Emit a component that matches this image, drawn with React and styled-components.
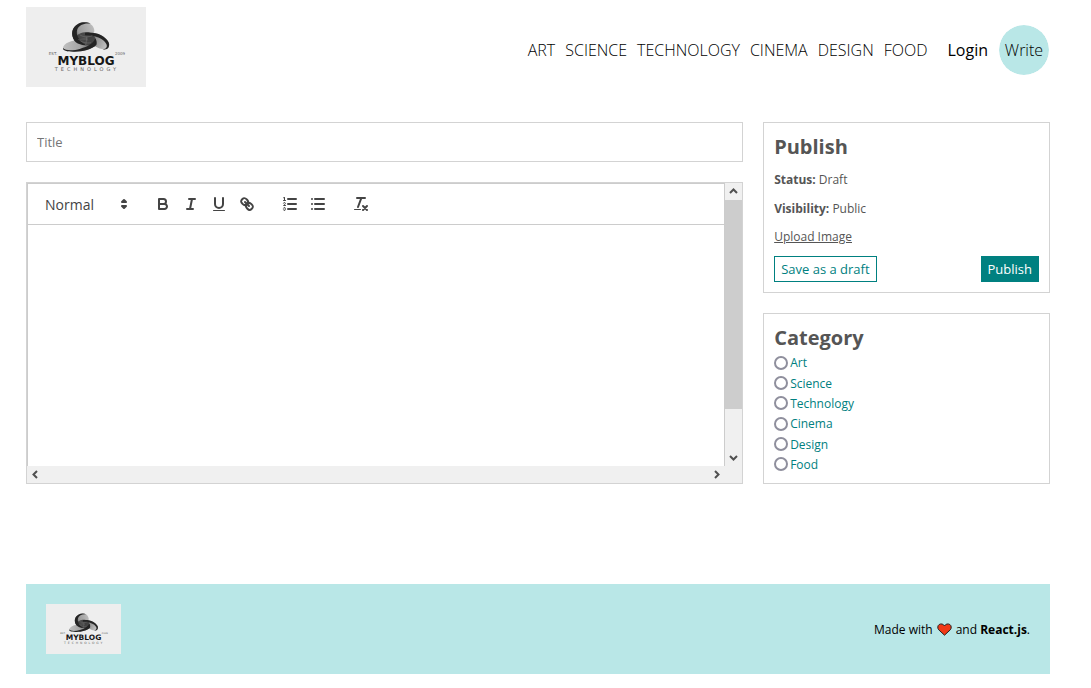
import React from "react";
import styled, { createGlobalStyle } from "styled-components";

const GlobalStyle = createGlobalStyle`
  *, *::before, *::after { box-sizing: border-box; }
  body {
    margin: 0;
    padding-right: 15px;
    background: #fff;
    color: #000;
    font-family: "Open Sans", "Noto Sans", sans-serif;
    font-size: 16px;
  }
  button, input, select, textarea { font-family: inherit; }
`;

const Container = styled.div`
  max-width: 1024px;
  margin: 0 auto;
`;

const Header = styled.header`
  display: flex;
  align-items: center;
  justify-content: space-between;
  min-height: 100px;
`;

const LogoLink = styled.a`
  display: block;
  margin-bottom: ${(p) => (p.$raised ? "6px" : "0")};
`;

const LogoSvg = styled.svg`
  display: block;
  width: ${(p) => p.$width}px;
  height: auto;
  background: #eee;
`;

const Nav = styled.nav`
  display: flex;
  align-items: center;
  gap: 10px;
`;

const NavLink = styled.a`
  color: #000;
  font-weight: ${(p) => (p.$account ? 400 : 300)};
  line-height: 22px;
  margin-left: ${(p) => (p.$account ? "10px" : "0")};
  text-decoration: none;
`;

const WriteLink = styled.a`
  display: flex;
  align-items: center;
  justify-content: center;
  width: 52px;
  height: 52px;
  border: 1px solid #fff;
  border-radius: 50%;
  background: #b9e7e7;
  background-clip: padding-box;
  color: #000;
  font-weight: 300;
  text-decoration: none;
`;

const Main = styled.main`
  display: flex;
  gap: 20px;
  margin-top: 22px;
`;

const Content = styled.section`
  flex: 5;
  min-width: 0;
  display: flex;
  flex-direction: column;
  gap: 20px;
`;

const TitleInput = styled.input`
  width: 100%;
  height: 40px;
  padding: 10px;
  border: 1px solid lightgray;
  font-size: 13px;
  &::placeholder { color: #757575; opacity: 1; }
`;

const EditorFrame = styled.div`
  display: grid;
  grid-template: 1fr 17px / 1fr 17px;
  height: 302px;
  border: 1px solid lightgray;
  background: #f0f0f0;
`;

const Editor = styled.div`
  display: flex;
  flex-direction: column;
  border: 1px solid #ccc;
  border-bottom: 0;
  background: #fff;
`;

const Toolbar = styled.div`
  display: flex;
  gap: 15px;
  padding: 8px;
  border-bottom: 1px solid #ccc;
`;

const ToolGroup = styled.div`
  display: flex;
`;

const ToolButton = styled.button`
  width: 28px;
  height: 24px;
  padding: 3px 5px;
  border: 0;
  background: none;
`;

const ToolIcon = styled.svg`
  display: block;
  width: 18px;
  height: 18px;
  fill: none;
  stroke: #444;
  stroke-width: 2;
  stroke-linecap: round;
  stroke-linejoin: round;
  .thin { stroke-width: 1; }
  .solid { fill: #444; stroke: none; }
  .filled { fill: #444; }
`;

const Picker = styled.div`
  position: relative;
  width: 98px;
  height: 24px;
  ${ToolIcon} {
    position: absolute;
    top: 3px;
    right: 1px;
    pointer-events: none;
  }
`;

const PickerSelect = styled.select`
  appearance: none;
  width: 100%;
  height: 24px;
  padding: 0 8px;
  border: 1px solid transparent;
  background: none;
  color: #444;
  font-size: 14px;
  font-weight: 500;
`;

const EditorText = styled.textarea`
  flex: 1;
  width: 100%;
  padding: 12px 15px;
  border: 0;
  outline: 0;
  resize: none;
  overflow: hidden;
  font-size: 13px;
`;

const ScrollTrack = styled.div`
  display: flex;
  flex-direction: ${(p) => (p.$vertical ? "column" : "row")};
  justify-content: space-between;
`;

const ScrollArrow = styled.button`
  width: 17px;
  height: 17px;
  padding: 0;
  border: 0;
  background: none;
  svg {
    display: block;
    fill: none;
    stroke: #505050;
    stroke-width: 2;
  }
`;

const ScrollRail = styled.div`
  flex: 1;
`;

const ScrollThumb = styled.div`
  height: 84%;
  background: #cdcdcd;
`;

const Sidebar = styled.aside`
  flex: 2;
  min-width: 0;
  display: flex;
  flex-direction: column;
  gap: 20px;
`;

const Panel = styled.section`
  flex: 1;
  display: flex;
  flex-direction: column;
  justify-content: space-between;
  padding: 10px;
  border: 1px solid lightgray;
  color: #555;
  font-size: 12px;
  line-height: 17px;
`;

const PanelTitle = styled.h1`
  margin: 0;
  font-size: 20px;
  line-height: 27px;
`;

const FileInput = styled.input`
  display: none;
`;

const UploadLabel = styled.label`
  text-decoration: underline;
  cursor: pointer;
`;

const Actions = styled.div`
  display: flex;
  justify-content: space-between;
`;

const ActionButton = styled.button`
  padding: 3px 6px;
  border: 1px solid teal;
  background: ${(p) => (p.$primary ? "teal" : "#fff")};
  color: ${(p) => (p.$primary ? "#fff" : "teal")};
  font-size: 13px;
  line-height: 18px;
  cursor: pointer;
`;

const Option = styled.label`
  display: flex;
  align-items: center;
  gap: 2px;
  color: teal;
`;

const Radio = styled.input`
  appearance: none;
  width: 14px;
  height: 14px;
  margin: 0;
  border: 2px solid #8f8f9d;
  border-radius: 50%;
  background: #fff;
  &:checked {
    border-color: teal;
    background: radial-gradient(teal 3px, #fff 4px);
  }
`;

const Footer = styled.footer`
  display: flex;
  align-items: center;
  justify-content: space-between;
  margin-top: 100px;
  padding: 20px;
  background: #b9e7e7;
  font-size: 12px;
`;

const Credit = styled.span`
  display: flex;
  align-items: center;
  gap: 4px;
  line-height: 17px;
`;

function Logo({ width, id }) {
  return (
    <LogoSvg $width={width} viewBox="0 0 120 80" role="img" aria-label="MyBlog Technology">
      <defs>
        <linearGradient id={id + "top"} x1="0" y1="0.6" x2="1" y2="0.3">
          <stop offset="0" stopColor="#444" />
          <stop offset="0.3" stopColor="#9a9a9a" />
          <stop offset="1" stopColor="#bdbdbd" />
        </linearGradient>
        <linearGradient id={id + "left"} x1="0" y1="0" x2="1" y2="0">
          <stop offset="0" stopColor="#c0c0c0" />
          <stop offset="0.5" stopColor="#a5a5a5" />
          <stop offset="1" stopColor="#555" />
        </linearGradient>
        <linearGradient id={id + "right"} x1="0" y1="0" x2="1" y2="0.4">
          <stop offset="0" stopColor="#333" />
          <stop offset="0.5" stopColor="#8d8d8d" />
          <stop offset="1" stopColor="#bdbdbd" />
        </linearGradient>
      </defs>
      <g transform="translate(19 8) scale(0.3333)">
        <path d="M54 99C56 84 82 73 110 74C132 75 150 80 154 90C140 103 110 111 85 110C66 110 53 107 54 99Z" fill={`url(#${id}left)`} />
        <path d="M120 53C152 49 182 62 191 82C196 96 188 106 174 103C160 100 148 92 134 86Z" fill={`url(#${id}right)`} />
        <path d="M89 78C76 58 80 36 100 26C122 16 146 26 148 46C149 60 136 66 118 68Z" fill={`url(#${id}top)`} />
        <path d="M93 70C94 56 112 51 130 52C148 56 155 72 152 88C134 96 98 92 93 70Z" fill="#3a3a3a" opacity="0.85" />
        <path d="M89 78C76 58 80 36 100 26C112 20 128 21 137 26C118 23 102 30 97 43C91 60 103 80 124 91C108 90 95 86 89 78Z" fill="#242424" />
        <path d="M120 53C152 49 182 62 191 82C196 96 188 106 174 103C184 102 188 95 184 87C176 70 150 61 120 61Z" fill="#242424" />
        <path d="M54 99C62 108 86 107 106 101C128 95 144 87 151 70C156 78 156 86 154 90C140 103 110 111 85 110C66 110 53 107 54 99Z" fill="#242424" />
        <path d="M104 59C112 66 130 68 142 62M100 72C108 82 124 86 138 83M126 66L122 90" fill="none" stroke="#777" strokeWidth="2" opacity="0.8" />
      </g>
      <g fontFamily="DejaVu Sans, sans-serif" textAnchor="middle">
        <text x="27" y="48" fontSize="4" fill="#666">EST.</text>
        <text x="94" y="48" fontSize="4" fill="#666">2009</text>
        <text x="60" y="58" fontSize="12" fontWeight="700" fill="#161616">MYBLOG</text>
        <text x="61" y="64" fontSize="5" letterSpacing="3" fill="#666">TECHNOLOGY</text>
      </g>
    </LogoSvg>
  );
}

const icons = {
  Bold: (
    <>
      <path d="M5,4H9.5A2.5,2.5,0,0,1,12,6.5v0A2.5,2.5,0,0,1,9.5,9H5V4Z" />
      <path d="M5,9h5.5A2.5,2.5,0,0,1,13,11.5v0A2.5,2.5,0,0,1,10.5,14H5V9Z" />
    </>
  ),
  Italic: <path d="M7,4H13M5,14H11M8,14L10,4" />,
  Underline: (
    <>
      <path d="M5,3V9a4.012,4.012,0,0,0,4,4H9a4.012,4.012,0,0,0,4-4V3" />
      <rect className="solid" x="3" y="15" width="12" height="1" rx="0.5" />
    </>
  ),
  Link: (
    <>
      <path d="M7,7L11,11" />
      <path d="M8.9,4.577a3.476,3.476,0,0,1,.36,4.679A3.476,3.476,0,0,1,4.577,8.9C3.185,7.5,2.035,6.4,4.217,4.217S7.5,3.185,8.9,4.577Z" />
      <path d="M13.423,9.1a3.476,3.476,0,0,0-4.679-.36,3.476,3.476,0,0,0,.36,4.679c1.392,1.392,2.5,2.542,4.679.36S14.815,10.5,13.423,9.1Z" />
    </>
  ),
  "Ordered list": (
    <>
      <path d="M7,4H15M7,9H15M7,14H15" />
      <path className="thin" d="M2.5,5.5H4.5" />
      <path className="solid" d="M3.5,6A0.5,0.5,0,0,1,3,5.5V3.085l-0.276.138A0.5,0.5,0,0,1,2.053,3c-0.124-.247-0.023-0.324.224-0.447l1-.5A0.5,0.5,0,0,1,4,2.5v3A0.5,0.5,0,0,1,3.5,6Z" />
      <path className="thin" d="M4.5,10.5h-2c0-.234,1.85-1.076,1.85-2.234A0.959,0.959,0,0,0,2.5,8.156" />
      <path className="thin" d="M2.5,14.846a0.959,0.959,0,0,0,1.85-.109A0.7,0.7,0,0,0,3.75,14a0.688,0.688,0,0,0,.6-0.736,0.959,0.959,0,0,0-1.85-.109" />
    </>
  ),
  "Bullet list": <path d="M6,4H15M6,9H15M6,14H15M3,4H3M3,9H3M3,14H3" />,
  "Clear formatting": (
    <>
      <path d="M5,3H13M6,12L9.35,3M11,11L15,15M15,11L11,15" />
      <rect className="solid" x="2" y="14" width="7" height="1" rx="0.5" />
    </>
  ),
};

const toolGroups = [
  ["Bold", "Italic", "Underline", "Link"],
  ["Ordered list", "Bullet list"],
  ["Clear formatting"],
];

const arrows = {
  up: "M5 10L8.5 6.5L12 10",
  down: "M5 7L8.5 10.5L12 7",
  left: "M10 5L6.5 8.5L10 12",
  right: "M7 5L10.5 8.5L7 12",
};

function Arrow({ direction }) {
  return (
    <ScrollArrow type="button" aria-label={`Scroll ${direction}`}>
      <svg width="17" height="17" viewBox="0 0 17 17">
        <path d={arrows[direction]} />
      </svg>
    </ScrollArrow>
  );
}

function RichEditor() {
  return (
    <EditorFrame>
      <Editor>
        <Toolbar>
          <Picker>
            <PickerSelect aria-label="Text style" defaultValue="Normal">
              <option>Heading 1</option>
              <option>Heading 2</option>
              <option>Normal</option>
            </PickerSelect>
            <ToolIcon viewBox="0 0 18 18">
              <polygon className="filled" points="7 11 9 13 11 11" />
              <polygon className="filled" points="7 7 9 5 11 7" />
            </ToolIcon>
          </Picker>
          {toolGroups.map((group) => (
            <ToolGroup key={group[0]}>
              {group.map((name) => (
                <ToolButton key={name} type="button" aria-label={name}>
                  <ToolIcon viewBox="0 0 18 18">{icons[name]}</ToolIcon>
                </ToolButton>
              ))}
            </ToolGroup>
          ))}
        </Toolbar>
        <EditorText aria-label="Post body" />
      </Editor>
      <ScrollTrack $vertical>
        <Arrow direction="up" />
        <ScrollRail>
          <ScrollThumb />
        </ScrollRail>
        <Arrow direction="down" />
      </ScrollTrack>
      <ScrollTrack>
        <Arrow direction="left" />
        <Arrow direction="right" />
      </ScrollTrack>
    </EditorFrame>
  );
}

const topics = ["Art", "Science", "Technology", "Cinema", "Design", "Food"];

export default function App() {
  return (
    <>
      <GlobalStyle />
      <Container>
        <Header>
          <LogoLink href="#home" $raised>
            <Logo width={120} id="header-" />
          </LogoLink>
          <Nav>
            {topics.map((topic) => (
              <NavLink key={topic} href={`#${topic.toLowerCase()}`}>
                {topic.toUpperCase()}
              </NavLink>
            ))}
            <NavLink href="#login" $account>Login</NavLink>
            <WriteLink href="#write">Write</WriteLink>
          </Nav>
        </Header>

        <Main>
          <Content>
            <TitleInput type="text" placeholder="Title" aria-label="Title" />
            <RichEditor />
          </Content>
          <Sidebar>
            <Panel>
              <PanelTitle>Publish</PanelTitle>
              <span><b>Status:</b> Draft</span>
              <span><b>Visibility:</b> Public</span>
              <FileInput type="file" id="file" />
              <span><UploadLabel htmlFor="file">Upload Image</UploadLabel></span>
              <Actions>
                <ActionButton type="button">Save as a draft</ActionButton>
                <ActionButton type="button" $primary>Publish</ActionButton>
              </Actions>
            </Panel>
            <Panel>
              <PanelTitle>Category</PanelTitle>
              {topics.map((topic) => (
                <Option key={topic}>
                  <Radio type="radio" name="category" value={topic.toLowerCase()} />
                  {topic}
                </Option>
              ))}
            </Panel>
          </Sidebar>
        </Main>

        <Footer>
          <LogoLink href="#home">
            <Logo width={75} id="footer-" />
          </LogoLink>
          <Credit>
            Made with
            <svg width="15" height="13" viewBox="0 0 15 13" role="img" aria-label="love">
              <path d="M7.5 12.2L1.7 6.8C0.3 5.2 0.5 2.6 2.2 1.5C4 0.4 6.4 0.9 7.5 3C8.6 0.9 11 0.4 12.8 1.5C14.5 2.6 14.7 5.2 13.3 6.8Z" fill="#f03a17" stroke="#222" />
            </svg>
            <span>and <b>React.js</b>.</span>
          </Credit>
        </Footer>
      </Container>
    </>
  );
}
